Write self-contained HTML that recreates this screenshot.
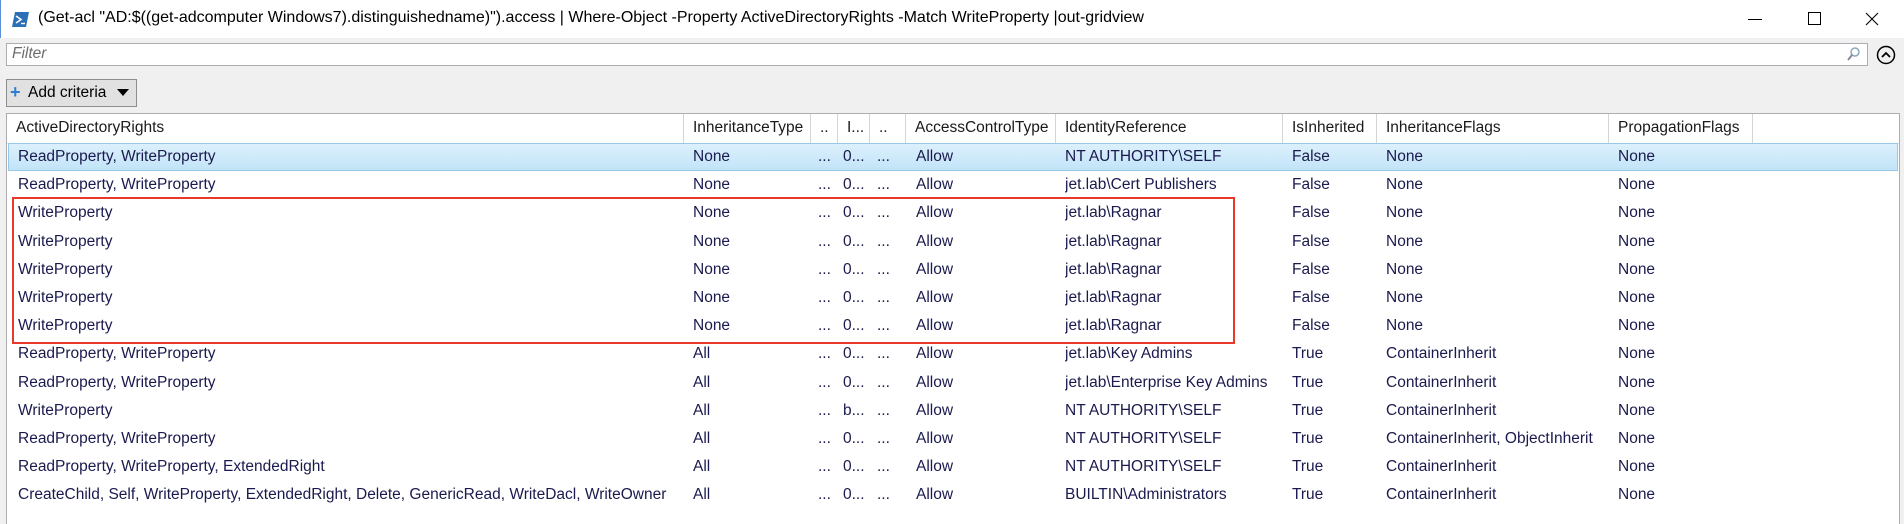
<!DOCTYPE html>
<html><head><meta charset="utf-8"><style>
*{margin:0;padding:0;box-sizing:border-box}
body{width:1904px;height:524px;overflow:hidden;background:#f0f0f0;font-family:"Liberation Sans",sans-serif;font-size:15.5px;color:#1a1a4e;position:relative}
.abs{position:absolute;white-space:nowrap}
#title{left:0;top:0;width:1904px;height:38px;background:#fff;border-left:1px solid #5b8fd6}
#grid{left:6px;top:113px;width:1894px;height:411px;background:#fff;border:1px solid #adadad;border-bottom:none}
.hdr{top:114px;height:29px;line-height:28px;color:#1a1a1a;border-right:1px solid #d5d5d5;padding-left:9px;overflow:hidden}
.cell{height:28px;line-height:28px;overflow:hidden}
</style></head><body>
<div class="abs" id="title"></div>
<svg class="abs" style="left:12px;top:12px" width="17" height="15"><polygon points="3,0 17,0 14,15 0,15" fill="#2b6fb6"/><path d="M4 4 L9 7.5 L4 11" stroke="#fff" stroke-width="1.6" fill="none"/><path d="M9 11.5 H13" stroke="#fff" stroke-width="1.4"/></svg>
<div class="abs" style="left:38px;top:9px;font-size:16px;color:#000">(Get-acl "AD:$((get-adcomputer Windows7).distinguishedname)").access | Where-Object -Property ActiveDirectoryRights -Match WriteProperty |out-gridview</div>
<div class="abs" style="left:1748px;top:19px;width:14px;height:1px;background:#000"></div>
<div class="abs" style="left:1808px;top:12px;width:13px;height:13px;border:1px solid #000"></div>
<svg class="abs" style="left:1865px;top:12px" width="14" height="14"><path d="M1 1L13 13M13 1L1 13" stroke="#000" stroke-width="1.1"/></svg>
<div class="abs" style="left:6px;top:43px;width:1862px;height:23px;background:#fff;border:1px solid #abadb3"></div>
<div class="abs" style="left:12px;top:45px;font-style:italic;color:#6d6d6d">Filter</div>
<svg class="abs" style="left:1846px;top:47px" width="14" height="15"><circle cx="9" cy="5" r="4" fill="none" stroke="#8ab" stroke-width="1.5"/><path d="M6 8L2 13" stroke="#889" stroke-width="2"/></svg>
<svg class="abs" style="left:1876px;top:45px" width="20" height="20"><circle cx="10" cy="10" r="8.5" fill="none" stroke="#000" stroke-width="1.5"/><path d="M6 12L10 8L14 12" fill="none" stroke="#000" stroke-width="1.8"/></svg>
<div class="abs" style="left:6px;top:79px;width:131px;height:28px;background:#e1e1e1;border:1px solid #8d8d8d"></div>
<div class="abs" style="left:10px;top:83px;color:#2d7cd0;font-weight:bold;font-size:18px;line-height:18px">+</div>
<div class="abs" style="left:28px;top:84px;color:#000">Add criteria</div>
<svg class="abs" style="left:117px;top:89px" width="12" height="8"><polygon points="0,0 12,0 6,7" fill="#000"/></svg>
<div class="abs" id="grid"></div>
<div class="abs" style="left:7px;top:143px;width:1892px;height:1px;background:#e3e3e3"></div>
<div id="hd"></div>
<div class="abs" style="left:8px;top:143px;width:1890px;height:28px;background:linear-gradient(#dcf0fc,#c2e4f8);border:1px solid #96c8ea"></div>
<div class="abs" style="left:12px;top:197px;width:1223px;height:147px;border:2px solid #e8392a"></div>
<div id="rows"></div>
<script>
var cols=[[7,684,"ActiveDirectoryRights"],[684,811,"InheritanceType"],[811,838,".."],[838,870,"I..."],[870,906,".."],[906,1056,"AccessControlType"],[1056,1283,"IdentityReference"],[1283,1377,"IsInherited"],[1377,1609,"InheritanceFlags"],[1609,1753,"PropagationFlags"]];
var h="";cols.forEach(function(c){h+='<div class="abs hdr" style="left:'+c[0]+'px;width:'+(c[1]-c[0])+'px">'+c[2]+'</div>'});
document.getElementById("hd").innerHTML=h;
var N=["None","...","0...","...","Allow"],A=["All","...","0...","...","Allow"];
var R=[["ReadProperty, WriteProperty",N,"NT AUTHORITY\\SELF","False","None","None"],
["ReadProperty, WriteProperty",N,"jet.lab\\Cert Publishers","False","None","None"],
["WriteProperty",N,"jet.lab\\Ragnar","False","None","None"],
["WriteProperty",N,"jet.lab\\Ragnar","False","None","None"],
["WriteProperty",N,"jet.lab\\Ragnar","False","None","None"],
["WriteProperty",N,"jet.lab\\Ragnar","False","None","None"],
["WriteProperty",N,"jet.lab\\Ragnar","False","None","None"],
["ReadProperty, WriteProperty",A,"jet.lab\\Key Admins","True","ContainerInherit","None"],
["ReadProperty, WriteProperty",A,"jet.lab\\Enterprise Key Admins","True","ContainerInherit","None"],
["WriteProperty",["All","...","b...","...","Allow"],"NT AUTHORITY\\SELF","True","ContainerInherit","None"],
["ReadProperty, WriteProperty",A,"NT AUTHORITY\\SELF","True","ContainerInherit, ObjectInherit","None"],
["ReadProperty, WriteProperty, ExtendedRight",A,"NT AUTHORITY\\SELF","True","ContainerInherit","None"],
["CreateChild, Self, WriteProperty, ExtendedRight, Delete, GenericRead, WriteDacl, WriteOwner",A,"BUILTIN\\Administrators","True","ContainerInherit","None"]];
var x=[18,693,818,843,877,916,1065,1292,1386,1618],s="";
R.forEach(function(r,i){var v=[r[0]].concat(r[1],[r[2],r[3],r[4],r[5]]);var t=143+i*28.2;
v.forEach(function(c,j){var w=(j<9?cols[j+1][0]:1890)-x[j];s+='<div class="abs cell" style="left:'+x[j]+'px;top:'+t+'px;width:'+w+'px">'+c+'</div>'})});
document.getElementById("rows").innerHTML=s;
</script>
</body></html>
